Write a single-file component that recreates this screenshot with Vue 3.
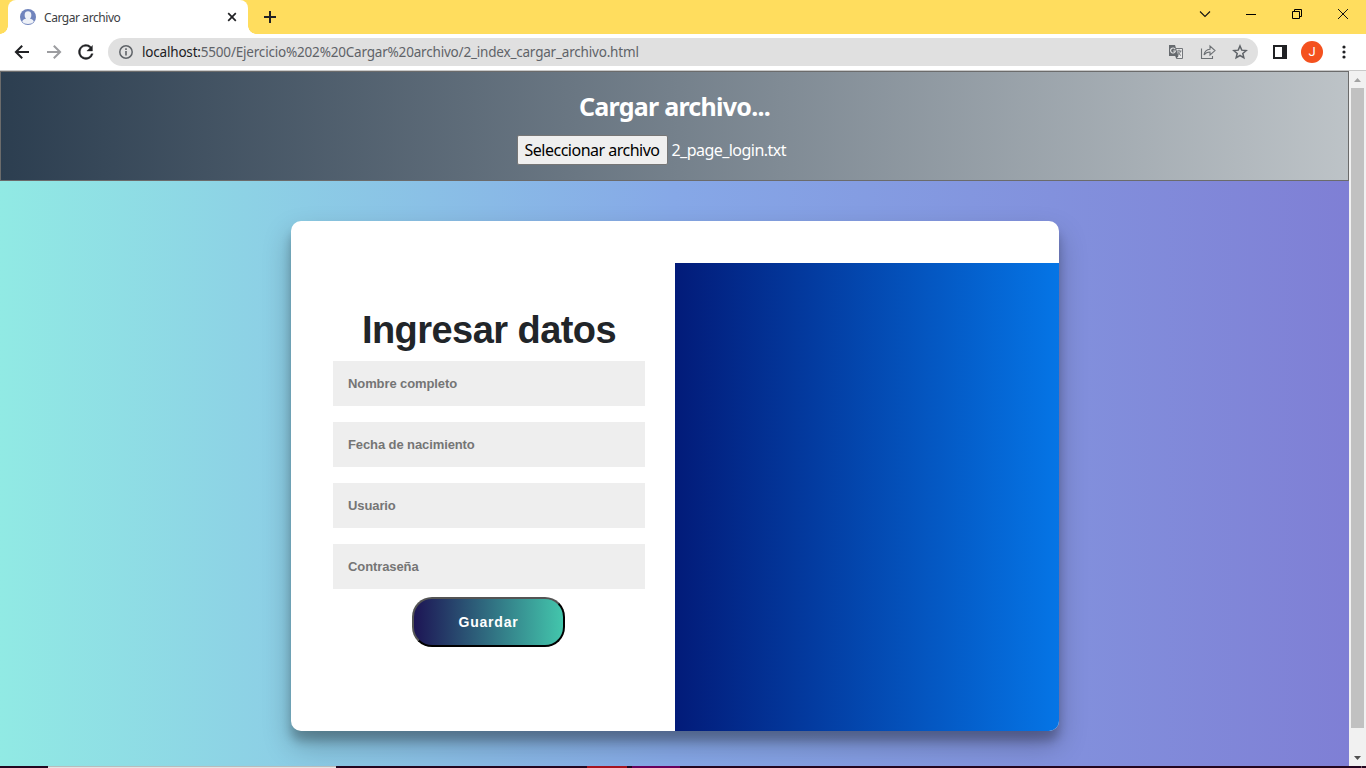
<script setup>
const fields = ['Nombre completo', 'Fecha de nacimiento', 'Usuario', 'Contraseña']
</script>

<template>
  <div class="browser">
    <header class="tabs">
      <div class="tab">
        <svg class="avatar" width="16" height="16" viewBox="0 0 16 16">
          <circle cx="8" cy="8" r="8" fill="#7084bd" />
          <path d="M2.2 12.7c.6-2 2.2-2.4 3.9-3.1C4.7 8.500 4.600 6.800 4.700 5.200c.1-1.700 1.400-3 3.300-3s3.200 1.300 3.300 3c.1 1.600 0 3.300-1.400 4.400 1.700.7 3.300 1.100 3.900 3.100-1.300 1.500-3.400 2.200-5.800 2.200s-4.500-.7-5.800-2.200z" fill="#eef1f7" />
        </svg>
        <span class="tab-title">Cargar archivo</span>
        <svg class="tab-close" width="10" height="10" viewBox="0 0 10 10"><path d="M1.200 1.200l7.600 7.600M8.800 1.200L1.200 8.800" stroke="#202124" stroke-width="1.700" /></svg>
      </div>
      <svg class="plus" width="12" height="12" viewBox="0 0 12 12"><path d="M6 0v12M0 6h12" stroke="#202124" stroke-width="2" /></svg>
      <div class="window-buttons">
        <svg width="12" height="12" viewBox="0 0 12 12"><path d="M1 3.500l5 5 5-5" fill="none" stroke="#111" stroke-width="1.100" /></svg>
        <svg width="12" height="12" viewBox="0 0 12 12"><path d="M1 6.500h10" stroke="#000" /></svg>
        <svg width="12" height="12" viewBox="0 0 12 12"><path d="M1.500 3.500h7v7h-7zM3.500 3.500v-2h7v7h-2" fill="none" stroke="#000" /></svg>
        <svg width="12" height="12" viewBox="0 0 12 12"><path d="M1 1l10 10M11 1L1 11" stroke="#111" /></svg>
      </div>
    </header>

    <nav class="toolbar">
      <svg class="nav-icon" width="16" height="16" viewBox="0 0 16 16"><path d="M15 8H2M8.200 1.700L1.900 8l6.300 6.300" fill="none" stroke="#202124" stroke-width="2" /></svg>
      <svg class="nav-icon" width="16" height="16" viewBox="0 0 16 16"><path d="M1 8h13M7.800 1.700L14.100 8l-6.300 6.300" fill="none" stroke="#9c9da0" stroke-width="2" /></svg>
      <svg class="nav-icon" width="16" height="16" viewBox="0 0 16 16"><path d="M13.650 2.350A8 8 0 1 0 15.730 10h-2.080A6 6 0 1 1 8 2c1.660 0 3.140.69 4.220 1.780L9 7h6V1z" fill="#202124" stroke="#202124" stroke-width=".4" transform="translate(.5 .5) scale(.93)" /></svg>
      <div class="address">
        <svg width="14" height="14" viewBox="0 0 14 14"><circle cx="7" cy="7" r="6.200" fill="none" stroke="#5f6368" stroke-width="1.500" /><path d="M7 6v4.500M7 3.300v1.600" stroke="#5f6368" stroke-width="1.600" /></svg>
        <span class="url"><b>localhost:</b>5500/Ejercicio%202%20Cargar%20archivo/2_index_cargar_archivo.html</span>
        <div class="actions">
          <svg width="16" height="16" viewBox="0 0 16 16">
            <path d="M6 4.500h8.500v10H8.500z" fill="#e9e9e9" stroke="#73767a" />
            <path d="M1 1h6l3.500 11H1z" fill="#666a6e" />
            <path d="M7.200 5.200A2.500 2.500 0 1 0 7.500 7H5.200" fill="none" stroke="#e0e0e0" stroke-width="1.200" />
            <path d="M9 7h4.500M11 5.700V7M12.500 7c-.5 2-1.500 3.300-3 4M10 8c.6 1.500 1.500 2.700 3 3.400" fill="none" stroke="#73767a" />
            <path d="M7.500 12h3l-2 2.500z" fill="#5b5f63" />
          </svg>
          <svg width="16" height="16" viewBox="0 0 16 16"><path d="M1.500 4.500v10h11v-2.500M4 10.800C4.600 7.300 6.500 5.500 10 5.200V2l5 4.600-5 4.400V8C7.300 8 5.500 8.800 4 10.800z" fill="none" stroke="#6c7074" stroke-width="1.100" /></svg>
          <svg width="16" height="16" viewBox="0 0 16 16"><path d="M8 2l1.750 4.150 4.450.38-3.380 2.930 1.020 4.350L8 11.500l-3.840 2.310 1.020-4.350L1.800 6.530l4.450-.38z" fill="none" stroke="#5f6368" stroke-width="1.500" /></svg>
        </div>
      </div>
      <svg class="panel-icon" width="14" height="14" viewBox="0 0 14 14"><path d="M1 1h12v12H1z" fill="#fff" stroke="#202124" stroke-width="2" /><path d="M9 0h5v14H9z" fill="#202124" /></svg>
      <span class="profile">J</span>
      <svg class="dots" width="4" height="14" viewBox="0 0 4 14"><circle cx="2" cy="2" r="1.600" /><circle cx="2" cy="7" r="1.600" /><circle cx="2" cy="12" r="1.600" /></svg>
    </nav>

    <div class="viewport">
      <main class="page">
        <section class="upload">
          <h1>Cargar archivo...</h1>
          <div class="file">
            <button type="button" class="file-button"><span>Seleccionar archivo</span></button>
            <span class="file-name">2_page_login.txt</span>
          </div>
        </section>
        <section class="card">
          <form class="form" @submit.prevent>
            <h2>Ingresar datos</h2>
            <input v-for="field in fields" :key="field" type="text" :placeholder="field" />
            <button type="submit" class="save">Guardar</button>
          </form>
          <div class="side"></div>
        </section>
      </main>
      <div class="scrollbar">
        <svg width="17" height="17" viewBox="0 0 17 17"><path d="M5 11h7L8.500 7z" fill="#a3a3a3" /></svg>
        <div class="thumb"></div>
        <svg width="17" height="17" viewBox="0 0 17 17"><path d="M5 7h7l-3.500 4z" fill="#505050" /></svg>
      </div>
    </div>
    <footer class="taskbar">
      <i class="search"></i><i class="red"></i><i class="purple"></i><i class="desktop"></i>
    </footer>
  </div>
</template>

<style>
body { overflow: hidden; }
</style>

<style scoped>
* { box-sizing: border-box; }
.browser { width: 1366px; height: 768px; display: flex; flex-direction: column; overflow: hidden; background: #fff; font-family: "Noto Sans", "Open Sans", sans-serif; }
svg { display: block; flex: none; }
.tabs { height: 34px; flex: none; display: flex; background: #ffdd5e; padding-left: 8px; }
.tab { width: 240px; height: 34px; background: #fff; border-radius: 8px 8px 0 0; display: flex; align-items: center; padding: 0 11px 0 12px; position: relative; }
.tab::before, .tab::after { content: ""; position: absolute; bottom: 0; width: 8px; height: 8px; }
.tab::before { left: -8px; background: radial-gradient(circle at 0 0, #ffdd5e 7.500px, #fff 8px); }
.tab::after { right: -8px; background: radial-gradient(circle at 100% 0, #ffdd5e 7.500px, #fff 8px); }
.tab-title { margin-left: 8px; font-size: 12px; letter-spacing: -.43px; color: #3c4043; white-space: nowrap; }
.tab-close { margin-left: auto; }
.plus { margin: 11px 0 0 16px; }
.window-buttons { margin: 8px 17px 0 auto; display: flex; gap: 34px; }
.toolbar { height: 37px; flex: none; display: flex; align-items: center; padding: 0 20px 0 14px; border-bottom: 1px solid #c9c9c9; }
.nav-icon { margin-right: 16px; }
.address { width: 1150px; height: 28px; margin-left: -2px; flex: none; border-radius: 14px; background: #e0e0e0; display: flex; align-items: center; padding: 0 10px 0 11px; }
.url { margin-left: 9px; font-size: 13.500px; letter-spacing: -.19px; color: #5f6368; white-space: nowrap; }
.url b { font-weight: 400; color: #202124; }
.actions { display: flex; gap: 16px; margin-left: auto; }
.panel-icon { margin-left: 15px; }
.profile { width: 22px; height: 22px; margin-left: 14px; border-radius: 50%; background: #f4511e; color: #fff; font: 13px/22px Roboto, sans-serif; text-align: center; }
.dots { margin-left: auto; fill: #202124; }
.viewport { height: 695px; flex: none; display: flex; }
.page { width: 1349px; background: linear-gradient(to right, #91eae4, #86a8e7, #7f7fd5); }
.upload { height: 110px; border: 1px solid #6b6b6b; background: linear-gradient(to right, #2c3e50, #bdc3c7); color: #fff; display: flex; flex-direction: column; align-items: center; }
h1 { margin: 16px 0 0; font-size: 25px; line-height: 36px; font-weight: 700; letter-spacing: -.74px; white-space: nowrap; }
.file { display: flex; align-items: center; width: 316px; height: 30px; margin-top: 11px; gap: 4px; }
.file-button { width: 151px; height: 30px; flex: none; border: 1px solid #767676; border-radius: 2px; padding: 0; background: #efefef; color: #000; font: 16px/28px "Noto Sans", sans-serif; letter-spacing: -.51px; white-space: nowrap; }
.file-name { font-size: 16px; letter-spacing: -.54px; white-space: nowrap; }
.card { width: 768px; height: 510px; margin: 40px auto 0 291px; padding-top: 42px; display: flex; background: #fff; border-radius: 10px; overflow: hidden; box-shadow: 0 14px 28px rgba(0,0,0,.25), 0 10px 10px rgba(0,0,0,.22); }
.form { width: 384px; padding: 40px 30px 0 42px; display: flex; flex-direction: column; align-items: center; font-family: "Liberation Sans", Arial, sans-serif; }
h2 { margin: 2px 0 6px; color: #212529; font-size: 38px; line-height: 50px; font-weight: 700; letter-spacing: -.55px; white-space: nowrap; }
input { width: 312px; height: 45px; flex: none; margin: 0 0 16px; border: 0; background: #eee; padding: 0 15px; font: 700 13px "Liberation Sans", Arial, sans-serif; letter-spacing: -.1px; outline: 0; }
input::placeholder { color: #757575; opacity: 1; }
.save { width: 153px; height: 50px; margin: -8px 1px 0 0; border: 2px outset #000; border-radius: 20px; background: linear-gradient(to right, #1d1555, #43c6ac); color: #fff; font: 700 14px "Liberation Sans", Arial, sans-serif; letter-spacing: .8px; }
.side { width: 384px; background: linear-gradient(to right, #021b79, #0575e6); }
.scrollbar { width: 17px; background: #f1f1f1; display: flex; flex-direction: column; }
.thumb { width: 13px; height: 640px; margin: 0 0 auto 2px; background: #c1c1c1; }
.taskbar { height: 2px; flex: none; display: flex; background: #24061f; }
.taskbar i { height: 2px; }
.search { width: 288px; margin-left: 48px; background: #e4e4e4; border-top: 1px solid #bbb; }
.red { width: 40px; margin-left: 251px; background: #a51420; }
.purple { width: 48px; margin-left: 5px; background: #68005c; }
.desktop { width: 1px; margin: 0 4px 0 auto; background: #77606f; }
</style>
